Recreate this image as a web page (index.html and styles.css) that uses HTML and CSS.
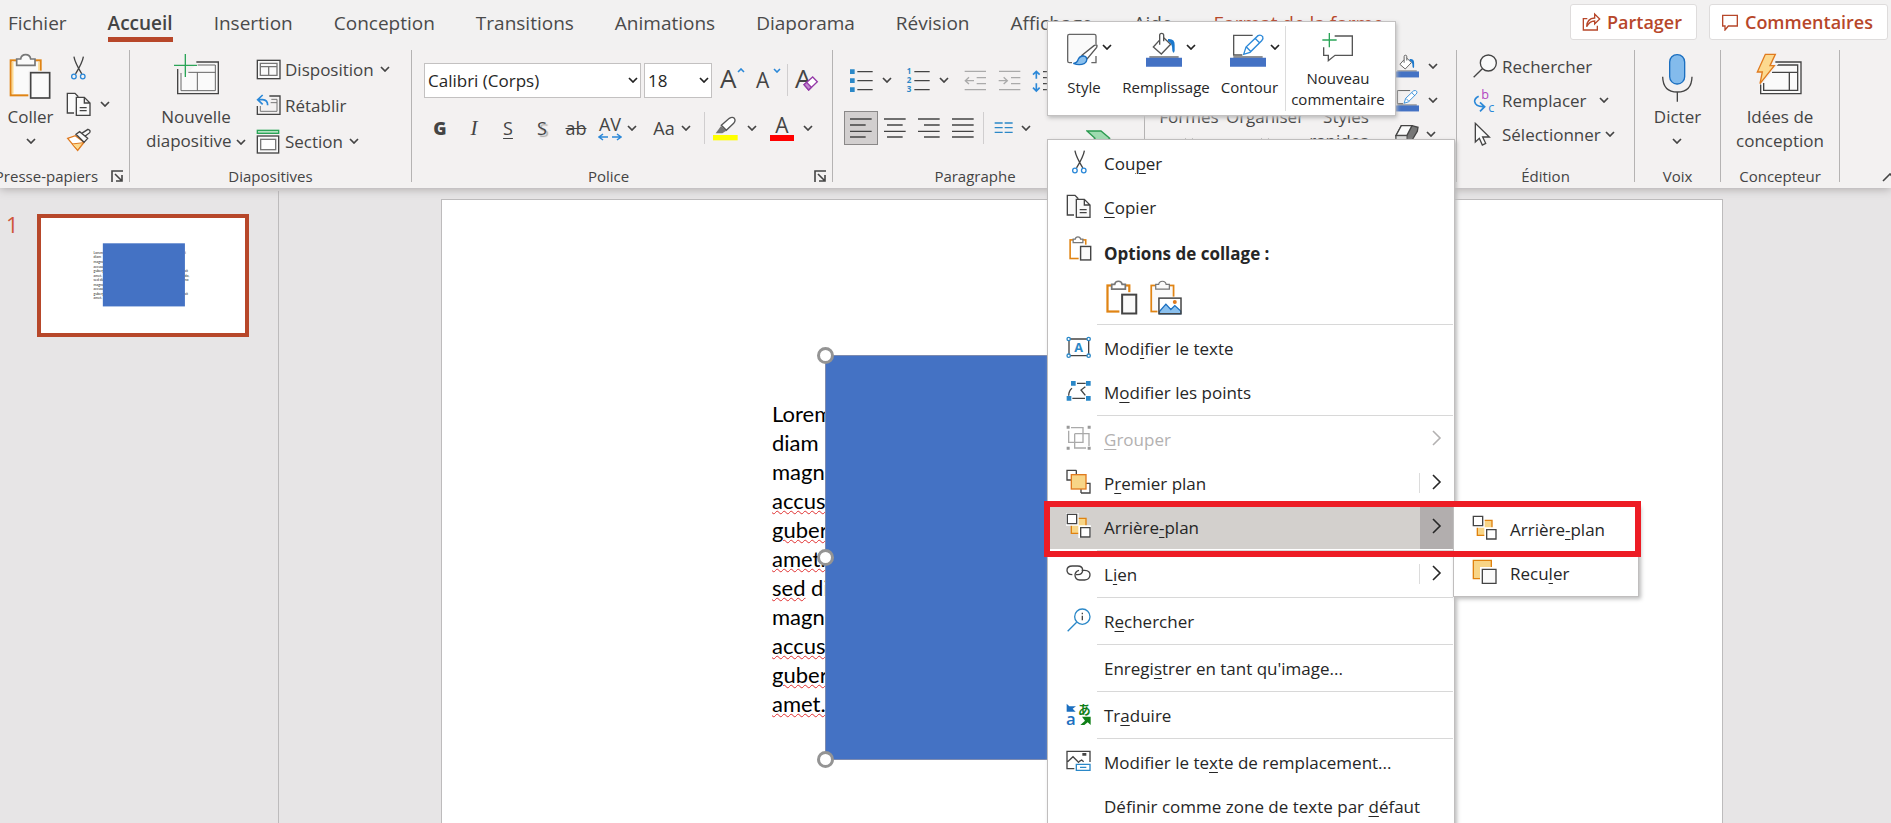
FILE: index.html
```
<!DOCTYPE html>
<html lang="fr">
<head>
<meta charset="utf-8">
<title>Présentation</title>
<link rel="stylesheet" href="styles.css">
</head>
<body>
<svg class="defs" aria-hidden="true">
  <symbol id="i-down" viewBox="0 0 10 6"><path d="M1 1l4 4 4-4" fill="none" stroke="currentColor" stroke-width="1.7"/></symbol>
  <symbol id="i-right" viewBox="0 0 10 16"><path d="M1 1l7 7-7 7" fill="none" stroke="currentColor" stroke-width="1.6"/></symbol>
  <symbol id="i-launch" viewBox="0 0 13 13"><path d="M1 12V1h11M4 4l7 7M11 5v6H5" fill="none" stroke="#444" stroke-width="1.6"/></symbol>
  <symbol id="i-paste" viewBox="40 165 129 141"><rect x="45" y="187" width="90" height="105" fill="#fafafa" stroke="#e08414" stroke-width="6"/><path d="M51 192v95M130 192v30" stroke="#fcd98f" stroke-width="5"/><path d="M63 202v-19h12q2-13 15-13t15 13h13v19z" fill="#fafafa" stroke="#777" stroke-width="5"/><path d="M98 218h70v85H98z" fill="#f5f3f3"/><rect x="105" y="224" width="57" height="76" fill="#fafafa" stroke="#444" stroke-width="5"/></symbol>
  <symbol id="i-paste-menu" viewBox="40 165 129 141"><rect x="46" y="187" width="88" height="105" fill="#fff" stroke="#e08414" stroke-width="9"/><path d="M63 202v-19h12q2-13 15-13t15 13h13v19z" fill="#fff" stroke="#777" stroke-width="7"/><path d="M94 214h75v90H94z" fill="#fff"/><rect x="105" y="224" width="57" height="76" fill="#fafafa" stroke="#444" stroke-width="8"/></symbol>
  <symbol id="i-pastepic" viewBox="40 165 129 141"><rect x="45" y="187" width="90" height="105" fill="#fafafa" stroke="#e08414" stroke-width="7"/><path d="M63 202v-19h12q2-13 15-13t15 13h13v19z" fill="#fafafa" stroke="#777" stroke-width="5"/><path d="M70 232h99v73H70z" fill="#fff"/><path d="M78 292l26-30 20 22 16-16 24 22v12H78z" fill="#8ac0ee" stroke="#1b6fc0" stroke-width="5"/><rect x="76" y="238" width="89" height="63" fill="none" stroke="#444" stroke-width="6"/><circle cx="140" cy="254" r="8" fill="#e07a1e"/></symbol>
  <symbol id="i-cut" viewBox="208 166 52 78"><g fill="none" stroke="#444" stroke-width="4"><path d="M220 170q3 18 24 53M249 170q-3 18-24 53"/><g stroke="#2b88d8"><circle cx="220" cy="231" r="7"/><circle cx="247" cy="231" r="7"/></g></g></symbol>
  <symbol id="i-copy" viewBox="196 275 78 75"><g fill="#fafafa" stroke="#444" stroke-width="4"><path d="M220 338h-20v-59h23l10 10" /><path d="M227 291h24l17 17v37h-41zM251 291v17h17M237 322h21M237 331h21"/></g></symbol>
  <symbol id="i-brush" viewBox="196 382 78 72"><path d="M201 413l23-8 26 20-19 24z" fill="#fff" stroke="#e07a1e" stroke-width="4"/><path d="M214 430l34-4-17 22z" fill="#fcd98f" stroke="#e07a1e" stroke-width="3"/><path d="M226 401l11-8 24 20-11 12zM243 398l19-12q9 3 5 10l-14 11" fill="#fafafa" stroke="#444" stroke-width="4"/></symbol>
  <symbol id="i-newslide" viewBox="516 156 141 129"><g fill="none"><path d="M590 187h58v87H534v-54h20z" fill="#fafafa"/><path d="M586 183h66v95H530v-74" stroke="#444" stroke-width="4"/><path d="M590 192h53v77H540v-53M562 214h81M589 214v55" stroke="#666" stroke-width="3"/><path d="M519 193h69M553 159v69" stroke="#2ba558" stroke-width="4"/></g></symbol>
  <symbol id="i-layout" viewBox="766 170 75 63"><g fill="#fafafa"><rect x="770" y="174" width="68" height="55" stroke="#444" stroke-width="4"/><path d="M779 183h50v36h-50zM779 193h50M804 193v26" stroke="#777" stroke-width="4"/></g></symbol>
  <symbol id="i-reset" viewBox="766 276 75 66"><g fill="none"><path d="M806 282h32v55h-68v-25" stroke="#444" stroke-width="4"/><path d="M812 292h17v36h-50v-16M810 302h19" stroke="#777" stroke-width="3"/><path d="M786 279l-15 14 15 14M771 293h15q15 1 15 17" stroke="#2b88d8" stroke-width="5"/></g></symbol>
  <symbol id="i-section" viewBox="766 382 75 75"><rect x="770" y="386" width="64" height="9" fill="#b5e2c2" stroke="#2ba558" stroke-width="4"/><rect x="770" y="403" width="64" height="51" fill="#fafafa" stroke="#444" stroke-width="4"/><rect x="780" y="413" width="45" height="31" fill="#fff" stroke="#777" stroke-width="4"/></symbol>
  <symbol id="i-bullets" viewBox="84 200 75 75"><path d="M87 204h14v14H87zM87 231h14v14H87zM87 258h14v14H87z" fill="#2b88c8"/><path d="M109 211h46M109 238h46M109 265h46" stroke="#444" stroke-width="4"/></symbol>
  <symbol id="i-align-l" viewBox="90 345 66 72"><path d="M90 354h65M90 372h47M90 391h65M90 408h47" stroke="#444" stroke-width="4"/></symbol>
  <symbol id="i-align-c" viewBox="90 345 66 72"><path d="M90 354h65M99 372h47M90 391h65M99 408h47" stroke="#444" stroke-width="4"/></symbol>
  <symbol id="i-align-r" viewBox="90 345 66 72"><path d="M90 354h65M108 372h47M90 391h65M108 408h47" stroke="#444" stroke-width="4"/></symbol>
  <symbol id="i-align-j" viewBox="90 345 66 72"><path d="M90 354h65M90 372h65M90 391h65M90 408h65" stroke="#444" stroke-width="4"/></symbol>
  <symbol id="i-fill" viewBox="318 94 108 105"><path d="M358 119l-18 20 24 21 28-29-21-20" fill="#fff" stroke="#555" stroke-width="4"/><path d="M359 132v-28q0-6 6-6t6 6v18" fill="none" stroke="#555" stroke-width="4"/><path d="M384 115q21-2 20 19v16q-3 12-7 0 0-24-13-28z" fill="#1b78cc"/><path d="M328 169h88" stroke="#222" stroke-width="3"/><path d="M318 171h108v27H318z" fill="#4472c4"/></symbol>
  <symbol id="i-outline" viewBox="576 94 108 105"><path d="M644 104h-57v59h26" fill="none" stroke="#555" stroke-width="4"/><path d="M617 161l7-22 36-34q8-4 14 3 3 6-3 12l-35 35zM651 113l15 15M626 140l13 13" fill="#fff" stroke="#2b88d8" stroke-width="4"/><path d="M586 169h88" stroke="#222" stroke-width="3"/><path d="M576 171h108v27H576z" fill="#4472c4"/></symbol>
  <symbol id="i-front" viewBox="79 208 78 78"><path d="M110 212H82v29h14M124 280h27v-29h-12M110 212v12M124 280v-12" fill="none" stroke="#444" stroke-width="4"/><rect x="95" y="225" width="44" height="43" fill="#f8d586" stroke="#e07a1e" stroke-width="4"/></symbol>
  <symbol id="i-back" viewBox="79 340 78 78"><path d="M95 356h44v45H95z" fill="#f8d586" stroke="#e0820f" stroke-width="4"/><path d="M79 340h38v38H79zM116 377h38v38h-38z" fill="#fff"/><path d="M83 344h28v28H83zM123 384h28v28h-28z" fill="#fff" stroke="#444" stroke-width="4"/></symbol>
</svg>

<div class="app">
  <header class="tabbar">
    <nav class="tabs" aria-label="Onglets du ruban">
      <a href="#fichier">Fichier</a>
      <a href="#accueil" class="active" aria-current="page">Accueil</a>
      <a href="#insertion">Insertion</a>
      <a href="#conception">Conception</a>
      <a href="#transitions">Transitions</a>
      <a href="#animations">Animations</a>
      <a href="#diaporama">Diaporama</a>
      <a href="#revision">Révision</a>
      <a href="#affichage">Affichage</a>
      <a href="#aide">Aide</a>
      <a href="#format" class="context">Format de la forme</a>
    </nav>
    <button class="action" type="button"><svg width="19" height="20" viewBox="424 38 57 60"><path d="M440 58h-12v34h42V79M438 82q1-25 24-26V44l15 15-15 15V65q-15 0-24 17z" fill="none" stroke="currentColor" stroke-width="4"/></svg>Partager</button>
    <button class="action" type="button"><svg width="18" height="17" viewBox="840 40 54 51"><path d="M845 44h44v32h-27l-10 12V76h-7z" fill="none" stroke="currentColor" stroke-width="4"/></svg>Commentaires</button>
  </header>

  <section class="ribbon" aria-label="Ruban">
    <div class="group clipboard">
      <div class="body">
        <button class="big" type="button"><span class="pic"><svg width="43" height="47"><use href="#i-paste"/></svg></span>Coller<svg class="down below" width="10" height="6"><use href="#i-down"/></svg></button>
        <div class="stack">
          <button class="row" type="button" aria-label="Couper"><svg class="mid" width="17" height="26"><use href="#i-cut"/></svg></button>
          <button class="row" type="button" aria-label="Copier"><svg width="26" height="25"><use href="#i-copy"/></svg><svg class="down far" width="10" height="6"><use href="#i-down"/></svg></button>
          <button class="row" type="button" aria-label="Reproduire la mise en forme"><svg width="26" height="24"><use href="#i-brush"/></svg></button>
        </div>
      </div>
      <div class="caption"><span>Presse-papiers</span><button class="launch" type="button" aria-label="Options du presse-papiers"><svg width="13" height="13"><use href="#i-launch"/></svg></button></div>
    </div>

    <div class="group slides">
      <div class="body">
        <button class="big" type="button"><span class="pic"><svg width="47" height="43"><use href="#i-newslide"/></svg></span>Nouvelle<span>diapositive <svg class="down" width="10" height="6"><use href="#i-down"/></svg></span></button>
        <div class="stack">
          <button class="row" type="button"><svg width="25" height="21"><use href="#i-layout"/></svg>Disposition<svg class="down" width="10" height="6"><use href="#i-down"/></svg></button>
          <button class="row" type="button"><svg width="25" height="22"><use href="#i-reset"/></svg>Rétablir</button>
          <button class="row" type="button"><svg width="25" height="25"><use href="#i-section"/></svg>Section<svg class="down" width="10" height="6"><use href="#i-down"/></svg></button>
        </div>
      </div>
      <div class="caption"><span>Diapositives</span></div>
    </div>

    <div class="group font">
      <div class="body lines">
        <div class="line">
          <span class="combo name"><select aria-label="Police"><option>Calibri (Corps)</option></select><svg class="down" width="10" height="6"><use href="#i-down"/></svg></span>
          <span class="combo size"><select aria-label="Taille"><option>18</option></select><svg class="down" width="10" height="6"><use href="#i-down"/></svg></span>
          <button class="tool letter large" type="button" aria-label="Augmenter la taille"><span>A</span><svg class="blue sup" width="8" height="5" viewBox="0 0 8 5"><path d="M1 4l3-3 3 3" fill="none" stroke="currentColor" stroke-width="1.6"/></svg></button>
          <button class="tool letter small" type="button" aria-label="Réduire la taille"><span>A</span><svg class="blue sup" width="8" height="5" viewBox="0 0 8 5"><path d="M1 1l3 3 3-3" fill="none" stroke="currentColor" stroke-width="1.6"/></svg></button>
          <span class="bar"></span>
          <button class="tool letter large clear" type="button" aria-label="Effacer la mise en forme"><span>A</span><svg class="eraser" width="16" height="15" viewBox="1206 228 48 45"><path d="M1209 254l26-23 14 14-26 25z" fill="#fff" stroke="#953ba8" stroke-width="4"/><path d="M1209 254l8-7 14 15-8 8z" fill="#c48ad0" stroke="#953ba8" stroke-width="4"/></svg></button>
        </div>
        <div class="line">
          <button class="tool b" type="button">G</button>
          <button class="tool i" type="button">I</button>
          <button class="tool u" type="button">S</button>
          <button class="tool shadow" type="button">S</button>
          <button class="tool strike" type="button">ab</button>
          <button class="split" type="button"><span class="spacing">AV<svg width="24" height="8" viewBox="0 0 24 8"><path d="M5 1L1 4l4 3M1 4h9M19 1l4 3-4 3M23 4h-9" fill="none" stroke="#2b88d8" stroke-width="1.5"/></svg></span><svg class="down" width="10" height="6"><use href="#i-down"/></svg></button>
          <button class="split" type="button"><span class="case">Aa</span><svg class="down" width="10" height="6"><use href="#i-down"/></svg></button>
          <span class="bar"></span>
          <button class="split wide" type="button" aria-label="Couleur de surbrillance"><svg width="25" height="25" viewBox="938 346 75 75"><path d="M946 398l16-22 16 14-12 8z" fill="#777"/><path d="M963 374l24-21q9-6 15 0 5 7-2 15l-22 21z" fill="#fff" stroke="#555" stroke-width="4"/><path d="M938 403h74v16h-74z" fill="#ff0"/></svg><svg class="down" width="10" height="6"><use href="#i-down"/></svg></button>
          <button class="split wide" type="button"><span class="fontcolor">A</span><svg class="down" width="10" height="6"><use href="#i-down"/></svg></button>
        </div>
      </div>
      <div class="caption"><span>Police</span><button class="launch" type="button" aria-label="Options de police"><svg width="13" height="13"><use href="#i-launch"/></svg></button></div>
    </div>

    <div class="group para">
      <div class="body lines">
        <div class="line">
          <button class="split list" type="button" aria-label="Puces"><svg width="25" height="25"><use href="#i-bullets"/></svg><svg class="down" width="10" height="6"><use href="#i-down"/></svg></button>
          <button class="split list" type="button" aria-label="Numérotation"><svg width="25" height="25" viewBox="255 200 75 75"><g class="digits"><text x="257" y="219">1</text><text x="257" y="246">2</text><text x="257" y="273">3</text></g><path d="M280 211h46M280 238h46M280 265h46" stroke="#444" stroke-width="4"/></svg><svg class="down" width="10" height="6"><use href="#i-down"/></svg></button>
          <button class="tool" type="button" aria-label="Réduire le retrait"><svg width="23" height="25" viewBox="434 200 69 75"><path d="M436 210h64M472 229h28M472 247h28M436 265h64M438 238h26M449 228l-11 10 11 10" fill="none" stroke="#aaa" stroke-width="4"/></svg></button>
          <button class="tool" type="button" aria-label="Augmenter le retrait"><svg width="23" height="25" viewBox="536 200 69 75"><path d="M539 210h64M575 229h28M575 247h28M539 265h64M538 238h26M553 228l11 10-11 10" fill="none" stroke="#aaa" stroke-width="4"/></svg></button>
          <button class="tool" type="button" aria-label="Interligne"><svg width="23" height="25" viewBox="637 200 69 75"><path d="M650 212v20M640 220l10-10 10 10M650 246v22M640 259l10 10 10-10" fill="none" stroke="#2b88d8" stroke-width="5"/><path d="M670 211h35M670 229h35M670 247h35M670 265h35" stroke="#444" stroke-width="4"/></svg></button>
        </div>
        <div class="line">
          <button class="tool on" type="button" aria-label="Aligner à gauche" aria-pressed="true"><svg width="22" height="24"><use href="#i-align-l"/></svg></button>
          <button class="tool" type="button" aria-label="Centrer"><svg width="22" height="24"><use href="#i-align-c"/></svg></button>
          <button class="tool" type="button" aria-label="Aligner à droite"><svg width="22" height="24"><use href="#i-align-r"/></svg></button>
          <button class="tool" type="button" aria-label="Justifier"><svg width="22" height="24"><use href="#i-align-j"/></svg></button>
          <span class="bar"></span>
          <button class="split cols" type="button" aria-label="Colonnes"><svg width="20" height="14" viewBox="523 362 60 42"><path d="M525 368h24M555 368h24M525 382h24M555 382h24M525 396h24M555 396h24" stroke="#2b88c8" stroke-width="4"/></svg><svg class="down" width="10" height="6"><use href="#i-down"/></svg></button>
          <button class="tool smartart" type="button" aria-label="Convertir en SmartArt"><svg width="25" height="20" viewBox="795 392 75 60"><path d="M798 395h42l26 22-26 22h-42l24-22z" fill="#9fdbb0" stroke="#2b9a50" stroke-width="4"/></svg></button>
        </div>
      </div>
      <div class="caption"><span>Paragraphe</span><span class="launch"></span></div>
    </div>

    <div class="group draw">
      <div class="body">
        <button class="big" type="button"><span class="pic"></span>Formes<svg class="down below" width="10" height="6"><use href="#i-down"/></svg></button>
        <button class="big" type="button"><span class="pic"></span>Organiser<svg class="down below" width="10" height="6"><use href="#i-down"/></svg></button>
        <button class="big" type="button"><span class="pic"></span>Styles<span>rapides <svg class="down" width="10" height="6"><use href="#i-down"/></svg></span></button>
        <div class="stack">
          <button class="row" type="button" aria-label="Remplissage"><svg width="24" height="24"><use href="#i-fill"/></svg><svg class="down far" width="10" height="6"><use href="#i-down"/></svg></button>
          <button class="row" type="button" aria-label="Contour"><svg width="24" height="24"><use href="#i-outline"/></svg><svg class="down far" width="10" height="6"><use href="#i-down"/></svg></button>
          <button class="row" type="button" aria-label="Effets"><svg width="24" height="21" viewBox="1059 370 72 63"><path d="M1062 406l16-31h32l18 5-2 12-15 25h-48z" fill="#777" stroke="#444" stroke-width="4"/><path d="M1078 375h32l-15 29h-33z" fill="#fafafa" stroke="#444" stroke-width="4"/><path d="M1062 405h33v14h-33z" fill="#ddd" stroke="#444" stroke-width="3"/></svg><svg class="down" width="10" height="6"><use href="#i-down"/></svg></button>
        </div>
      </div>
      <div class="caption"><span>Dessin</span></div>
    </div>

    <div class="group edit">
      <div class="body">
        <div class="stack">
          <button class="row" type="button"><svg width="25" height="25" viewBox="100 157 75 75"><path d="M128 201l-26 26" stroke="#444" stroke-width="4"/><circle cx="146" cy="184" r="24" fill="#fafafa" stroke="#444" stroke-width="4"/></svg>Rechercher</button>
          <button class="row" type="button"><svg width="25" height="25" viewBox="97 260 75 75"><text class="rep-b" x="122" y="292">b</text><text class="rep-c" x="143" y="332">c</text><path d="M114 285q-13 7-12 16 3 16 28 15M118 303l14 13-14 14" fill="none" stroke="#2b88d8" stroke-width="5"/></svg>Remplacer<svg class="down far" width="10" height="6"><use href="#i-down"/></svg></button>
          <button class="row" type="button"><svg width="25" height="24" viewBox="103 364 75 72"><path d="M110 368v56l12-11 9 20 10-5-9-19h20z" fill="#fafafa" stroke="#444" stroke-width="4"/></svg>Sélectionner<svg class="down" width="10" height="6"><use href="#i-down"/></svg></button>
        </div>
      </div>
      <div class="caption"><span>Édition</span></div>
    </div>

    <div class="group">
      <div class="body center">
        <button class="big" type="button"><span class="pic"><svg width="33" height="49" viewBox="666 156 99 147"><rect x="692" y="161" width="45" height="88" rx="22" fill="#83bbec" stroke="#1b6fc0" stroke-width="4"/><path d="M671 227q1 46 44 46t44-46M715 273v29" fill="none" stroke="#444" stroke-width="4"/></svg></span>Dicter<svg class="down below" width="10" height="6"><use href="#i-down"/></svg></button>
      </div>
      <div class="caption"><span>Voix</span></div>
    </div>

    <div class="group">
      <div class="body center">
        <button class="big" type="button"><span class="pic"><svg width="47" height="43" viewBox="946 156 141 129"><path d="M960 187h120v91H960z" fill="#fafafa"/><g fill="none" stroke="#444" stroke-width="4"><path d="M1004 183h77v95H960v-30M1000 192h71v76H969v-22M994 214h77M1046 214v54"/></g><path d="M974 160h30l-16 34h13l-43 54 7-35h-15z" fill="#fcd98f" stroke="#f3f1f1" stroke-width="12"/><path d="M974 160h30l-16 34h13l-43 54 7-35h-15z" fill="#fcd98f" stroke="#e07a1e" stroke-width="4"/></svg></span>Idées de<span>conception</span></button>
      </div>
      <div class="caption"><span>Concepteur</span></div>
    </div>

    <div class="collapse"><button type="button" aria-label="Réduire le ruban"><svg width="16" height="9" viewBox="0 0 16 9"><path d="M1 8l7-7 7 7" fill="none" stroke="#444" stroke-width="1.6"/></svg></button></div>
  </section>

  <main class="workspace">
    <aside class="thumbs">
      <span class="num">1</span>
      <svg class="thumb" viewBox="0 0 1280 720" role="img" aria-label="Diapositive 1">
        <g class="thumb-text">
          <text x="330" y="223">Lorem</text><text x="330" y="252">diam</text><text x="330" y="281">magna</text><text x="330" y="310">accusam</text><text x="330" y="338">gubergren</text><text x="330" y="367">amet.</text><text x="330" y="396">sed diam</text><text x="330" y="425">magna</text><text x="330" y="454">accusam</text><text x="330" y="482">gubergren</text><text x="330" y="510">amet.</text>
          <text x="903" y="223">i</text><text x="900" y="338">sit</text><text x="900" y="367">do,</text><text x="900" y="396">no</text><text x="900" y="482">sit</text>
        </g>
        <rect x="388" y="158" width="515" height="396" fill="#4472c4"/>
      </svg>
    </aside>
    <div class="canvas">
      <article class="slide">
        <div class="textbox">
          <div>Lorem</div><div>diam</div><div>magna</div><div><u>accusam</u></div><div><u>gubergren</u></div><div><u>amet.</u></div><div><u>sed</u> diam</div><div>magna</div><div><u>accusam</u></div><div><u>gubergren</u></div><div><u>amet.</u></div>
        </div>
        <div class="shape"><i class="handle top"></i><i class="handle middle"></i><i class="handle bottom"></i></div>
      </article>
    </div>
  </main>

  <div class="mini" role="toolbar" aria-label="Mini-barre d'outils">
    <button class="m-style" type="button"><span class="pic"><svg width="32" height="34" viewBox="82 94 96 102"><path d="M100 186h-8q-5 0-5-5v-75q0-5 5-5h75q5 0 5 5v24M172 166v20h-14" fill="#fafafa" stroke="#666" stroke-width="4"/><path d="M130 164l36-29q12-6 8 5l-28 34z" fill="#fff" stroke="#555" stroke-width="4"/><path d="M104 188q12-1 15-13 8-13 22-7 8 12-3 20-16 8-34 0z" fill="#8ac0ee" stroke="#1b6fc0" stroke-width="4"/></svg><svg class="down" width="10" height="6"><use href="#i-down"/></svg></span>Style</button>
    <button class="m-fill" type="button"><span class="pic"><svg width="36" height="35"><use href="#i-fill"/></svg><svg class="down" width="10" height="6"><use href="#i-down"/></svg></span>Remplissage</button>
    <button class="m-line" type="button"><span class="pic"><svg width="36" height="35"><use href="#i-outline"/></svg><svg class="down" width="10" height="6"><use href="#i-down"/></svg></span>Contour</button>
    <button class="m-note" type="button"><span class="pic"><svg width="32" height="30" viewBox="846 94 96 90"><path d="M884 106h53v58h-52l-20 16v-16h-14v-24" fill="none" stroke="#555" stroke-width="4"/><path d="M847 118h43M868 97v43" stroke="#2ba558" stroke-width="4"/></svg></span>Nouveau<br>commentaire</button>
  </div>

  <div class="menu context-menu" role="menu">
    <button class="item" type="button" role="menuitem"><span class="ic"><svg width="17" height="26"><use href="#i-cut"/></svg></span><span>Cou<u>p</u>er</span></button>
    <button class="item" type="button" role="menuitem"><span class="ic"><svg width="26" height="25"><use href="#i-copy"/></svg></span><span><u>C</u>opier</span></button>
    <div class="item heading"><span class="ic right"><svg width="23" height="25"><use href="#i-paste-menu"/></svg></span><span>Options de collage :</span></div>
    <div class="paste-row">
      <button type="button" aria-label="Utiliser le thème de destination"><svg width="32" height="35"><use href="#i-paste-menu"/></svg></button>
      <button type="button" aria-label="Image"><svg width="32" height="35"><use href="#i-pastepic"/></svg></button>
    </div>
    <hr>
    <button class="item" type="button" role="menuitem"><span class="ic"><svg width="26" height="23" viewBox="79 617 78 69"><path d="M88 626h59v50H88z" fill="none" stroke="#444" stroke-width="4"/><g fill="#fff" stroke="#2b88c8" stroke-width="4"><circle cx="87" cy="626" r="5"/><circle cx="147" cy="626" r="5"/><circle cx="87" cy="676" r="5"/><circle cx="147" cy="676" r="5"/></g><text class="box-a" x="117" y="665">A</text></svg></span><span>Mod<u>i</u>fier le texte</span></button>
    <button class="item" type="button" role="menuitem"><span class="ic"><svg width="26" height="22" viewBox="79 748 78 66"><path d="M112 758h26M97 773q-10 8-10 22M98 803h38M137 768l-13 10 13 16" fill="none" stroke="#444" stroke-width="4"/><path d="M94 751h14v14H94zM139 751h14v14h-14zM81 796h14v14H81zM139 796h14v14h-14z" fill="#2b88c8"/></svg></span><span>M<u>o</u>difier les points</span></button>
    <hr>
    <button class="item" type="button" role="menuitem" disabled><span class="ic"><svg width="26" height="26" viewBox="79 76 78 78"><g fill="none" stroke="#aaa" stroke-width="4"><path d="M94 84h36v44H87V93M105 102h43v37M105 102v43h34"/></g><path d="M81 78h9v9h-9zM144 78h9v9h-9zM81 141h9v9h-9zM144 141h9v9h-9z" fill="#999"/></svg></span><span><u>G</u>rouper</span><svg class="more" width="10" height="16"><use href="#i-right"/></svg></button>
    <button class="item" type="button" role="menuitem"><span class="ic"><svg width="26" height="26"><use href="#i-front"/></svg></span><span>P<u>r</u>emier plan</span><span class="rule"></span><svg class="more" width="10" height="16"><use href="#i-right"/></svg></button>
    <button class="item selected" type="button" role="menuitem" aria-expanded="true"><span class="ic"><svg width="26" height="26"><use href="#i-back"/></svg></span><span>Arrière<u>-</u>plan</span><span class="arrow"><svg class="more" width="10" height="16"><use href="#i-right"/></svg></span></button>
    <hr>
    <button class="item" type="button" role="menuitem"><span class="ic"><svg width="26" height="18" viewBox="79 492 78 54"><g fill="none" stroke="#444" stroke-width="4"><path d="M98 524q-16 0-16-13t16-13h16q15 0 15 13t-15 13h-5"/><path d="M126 511h9q17 1 16 14-1 14-16 15h-15q-14-1-14-15 1-11 12-14"/></g></svg></span><span>L<u>i</u>en</span><span class="rule"></span><svg class="more" width="10" height="16"><use href="#i-right"/></svg></button>
    <hr>
    <button class="item" type="button" role="menuitem"><span class="ic"><svg width="26" height="26" viewBox="79 50 78 78"><path d="M111 96l-27 27" stroke="#2b88c8" stroke-width="4"/><circle cx="128" cy="79" r="23" fill="#fff" stroke="#2b88c8" stroke-width="4"/><path d="M128 76v14M128 67v5" stroke="#444" stroke-width="4"/></svg></span><span>R<u>e</u>chercher</span></button>
    <hr>
    <button class="item" type="button" role="menuitem"><span class="ic"></span><span>Enregi<u>s</u>trer en tant qu'image...</span></button>
    <hr>
    <button class="item" type="button" role="menuitem"><span class="ic"><svg width="26" height="26" viewBox="79 334 78 78"><text class="tr-a" x="79" y="407">a</text><text class="tr-j" x="115" y="372">あ</text><path d="M81 342l8 8h20l-10 7 9 9H81z" fill="#1b6fc0"/><path d="M153 406l-9-8-10 8h-12l14-13-9-12h26z" fill="#118018"/></svg></span><span>Tr<u>a</u>duire</span></button>
    <hr>
    <button class="item" type="button" role="menuitem"><span class="ic"><svg width="26" height="24" viewBox="79 482 78 72"><path d="M104 541H82v-52h69v32M84 520l16-15 18 18M118 520l8-5 6 5M130 500h8v-4h-8z" fill="none" stroke="#444" stroke-width="4"/><path d="M110 528h41v18h-41zM121 537h19" fill="#fff" stroke="#2b88c8" stroke-width="4"/></svg></span><span>Modifier le te<u>x</u>te de remplacement...</span></button>
    <button class="item" type="button" role="menuitem"><span class="ic"></span><span>Définir comme zone de texte par <u>d</u>éfaut</span></button>
  </div>

  <div class="menu submenu" role="menu">
    <button class="item" type="button" role="menuitem"><span class="ic"><svg width="26" height="26"><use href="#i-back"/></svg></span><span>Arrière<u>-</u>plan</span></button>
    <button class="item" type="button" role="menuitem"><span class="ic"><svg width="26" height="26" viewBox="157 237 78 78"><path d="M161 241h54v55h-54z" fill="#f8d586" stroke="#e0820f" stroke-width="4"/><path d="M181 261h54v54h-54z" fill="#fff"/><path d="M188 268h41v42h-41z" fill="#fafafa" stroke="#444" stroke-width="4"/></svg></span><span>Recu<u>l</u>er</span></button>
  </div>
  <div class="highlight"></div>
</div>
</body>
</html>
```

FILE: styles.css
```
* { box-sizing: border-box; }
body { margin: 0; font-family: "Open Sans", "Noto Sans", "Noto Sans CJK JP", sans-serif; font-size: 17px; color: #444; }
button { font: inherit; color: inherit; background: none; border: 0; padding: 0; margin: 0; white-space: nowrap; }
svg { flex: none; display: block; }
.defs { position: absolute; width: 0; height: 0; }
.app { position: relative; height: 100vh; overflow: hidden; display: flex; flex-direction: column; background: #e7e5e6; }

/* Tabs */
.tabbar { display: flex; align-items: flex-start; height: 50px; padding: 4px 3px 0 8px; background: #f2f1f1; font-size: 18px; }
.tabs { display: flex; gap: 41px; flex: 1; font-size: 19px; }
.tabs a { color: #4a4a4a; text-decoration: none; line-height: 28px; padding-top: 5px; height: 38px; white-space: nowrap; }
.tabs .active { font-weight: 600; border-bottom: 5px solid #b7472a; color: #444; }
.tabs .context { color: #b7472a; }
.action { display: flex; align-items: center; gap: 6px; height: 36px; padding: 0 14px 0 11px; margin-left: 12px; background: #fff; border: 1px solid #dedcdc; border-radius: 3px; color: #b7472a; font-weight: 600; }

/* Ribbon */
.ribbon { position: relative; flex: none; display: grid; grid-template-columns: 130fr 282fr 421fr 312fr 312fr 178fr 86fr 119fr 51fr; padding-bottom: 6px; background: #f3f1f1; box-shadow: 0 1px 9px #aaa6a7; clip-path: inset(0 0 -12px 0); }
.group { display: flex; flex-direction: column; height: 132px; min-width: 0; border-right: 1px solid #b5b3b3; }
.body { flex: 1; display: flex; align-items: flex-start; }
.body.center { justify-content: center; }
.caption { display: flex; justify-content: center; align-items: center; height: 20px; margin-bottom: -4px; font-size: 15px; line-height: 20px; }
.caption > span:first-child { flex: 1; display: flex; justify-content: center; white-space: nowrap; }
.launch { flex: none; width: 27px; padding-left: 9px; }
.clipboard .caption > span:first-child { margin-left: -9px; }

.big { display: flex; flex-direction: column; align-items: center; padding-top: 3px; line-height: 24px; }
.big .pic { height: 52px; }
.big .down { margin: 0; }
.big span .down { display: inline-block; vertical-align: middle; }
.big .below { margin: 9px 0; }
.stack { display: flex; flex-direction: column; }
.row { display: flex; align-items: center; gap: 4px; height: 36px; text-align: left; }
.row .down { margin-left: 3px; }
.row .far { margin-left: 5px; }
.row .mid { margin-left: 4px; }
.clipboard .big { width: 61px; }
.clipboard .stack { padding-left: 5px; }
.clipboard .far { margin-left: 4px; }
.slides { padding-left: 14px; }
.slides .big { width: 104px; }
.slides .stack { padding: 1px 0 0 8px; }
.slides .row .down { margin-left: 2px; }
.slides .caption { margin-left: -14px; }
.draw .big:nth-child(1) { width: 88px; }
.draw .big:nth-child(2) { width: 64px; }
.draw .big:nth-child(3) { width: 98px; }
.draw .row, .edit .row { height: 34px; padding-bottom: 2px; }
.edit .body { padding-left: 16px; }
.edit .far { margin-left: 8px; }
.edit .row .down:not(.far) { margin-left: 0; }

.lines { flex-direction: column; gap: 14px; padding: 13px 0 0 11px; }
.line { display: flex; align-items: center; height: 34px; }
.combo { position: relative; display: flex; align-items: center; height: 35px; margin: 0 3px 0 1px; }
.combo.size { margin: 0 4px 0 0; }
.combo select { appearance: none; width: 100%; height: 35px; padding: 0 3px; border: 1px solid #c3c1c1; border-radius: 0; background: #fff; font: inherit; color: #262626; }
.combo .down { position: absolute; right: 3px; color: #222; }
.combo.name { width: 217px; }
.combo.size { width: 68px; }
.tool { width: 34px; height: 34px; display: flex; align-items: center; justify-content: center; font-size: 18px; }
.tool.on { background: #d2cfcf; border: 1px solid #8a8888; }
.letter { position: relative; width: 36px; justify-content: flex-start; padding-left: 4px; font-size: 21px; line-height: 34px; }
.letter.large { font-size: 26px; }
.letter.large span { margin-top: -4px; }
.letter.small { width: 32px; }
.sup { position: absolute; top: 5px; right: 7px; }
.small .sup { right: 3px; }
.blue { color: #2b88d8; }
.eraser { position: absolute; right: 8px; bottom: 6px; }
.bar { width: 1px; height: 32px; background: #d0cecf; margin: 0 3px; }
.b { font-weight: 800; }
.i { font-style: italic; font-family: "Liberation Serif", serif; font-size: 21px; }
.u { text-decoration: underline; text-underline-offset: 3px; }
.shadow { text-shadow: 2px 2px 1px #aaa; }
.strike { text-decoration: line-through; }
.split { display: flex; align-items: center; gap: 5px; width: 54px; height: 34px; padding-left: 5px; font-size: 18px; }
.split.wide { width: 57px; gap: 9px; }
.spacing, .case { width: 24px; display: flex; flex-direction: column; align-items: center; line-height: 18px; }
.fontcolor { width: 24px; text-align: center; font-size: 21px; line-height: 20px; border-bottom: 6px solid #f00; }
.split.list { width: 57px; gap: 8px; }
.cols { width: 45px; gap: 7px; padding-left: 7px; }
.smartart { margin: 10px 0 0 49px; align-items: flex-end; }
.digits { font-size: 24px; font-weight: 700; fill: #2b88c8; }
.rep-b { font-size: 38px; fill: #b146c2; }
.rep-c { font-size: 38px; fill: #2b88d8; }
.collapse { display: flex; align-items: flex-end; justify-content: flex-end; overflow: hidden; }
.collapse button { margin-right: -7px; }

/* Workspace */
.workspace { flex: 1; min-height: 0; display: flex; padding-top: 3px; }
.thumbs { flex: none; width: 279px; display: flex; align-items: flex-start; padding: 23px 0 0 6px; border-right: 1px solid #bdbbbc; }
.num { width: 31px; font-size: 22px; line-height: 20px; color: #d0563a; }
.thumb { width: 212px; height: 123px; border: 4px solid #b7472a; background: #fff; }
.thumb-text { font-family: Lato, sans-serif; font-size: 22px; fill: #222; }
.canvas { flex: 1; padding: 8px 168px 0 162px; }
.slide { position: relative; height: 100%; background: #fff; border: 1px solid #bdbbbc; border-bottom: 0; }
.textbox { position: absolute; left: 330px; top: 199px; color: #000; font: 22px/29px Lato, sans-serif; }
.textbox u { text-decoration: underline wavy #e03030 1px; text-underline-offset: 1px; }
.shape { position: absolute; left: 383px; top: 155px; width: 515px; height: 405px; background: #4472c4; border: 1px solid #7d8bb0; }
.handle { position: absolute; left: -9px; width: 17px; height: 17px; border: 3px solid #949494; border-radius: 50%; background: #fff; }
.handle.top { top: -9px; }
.handle.middle { top: 193px; }
.handle.bottom { bottom: -9px; }

/* Floating toolbar */
.mini { position: absolute; left: 1047px; top: 21px; display: flex; height: 95px; padding: 4px 0; background: #fff; border: 1px solid #c3c1c1; box-shadow: 1px 2px 4px #bbb; font-size: 15px; line-height: 21px; color: #262626; }
.mini button { display: flex; flex-direction: column; align-items: center; padding-top: 6px; }
.mini .pic { display: flex; gap: 4px; align-items: center; height: 45px; padding-bottom: 11px; margin-left: 10px; }
.mini .down { margin-bottom: 4px; color: #222; }
.mini .m-style { width: 70px; padding-left: 2px; }
.m-fill { width: 96px; }
.m-line { width: 71px; }
.mini .m-note { display: block; width: 110px; padding: 5px 5px 0 0; border-left: 1px solid #dcdcdc; text-align: center; }
.mini .m-note .pic { justify-content: center; margin: 0; height: 36px; padding-bottom: 6px; }

/* Menus */
.menu { position: absolute; background: #fff; border: 1px solid #c0bebe; box-shadow: 2px 2px 4px #bbb; padding: 1px 0; color: #262626; }
.context-menu { left: 1047px; top: 139px; width: 408px; }
.submenu { left: 1453px; top: 505px; width: 186px; }
.item { display: flex; align-items: center; gap: 12px; width: 100%; height: 44px; padding-left: 18px; text-align: left; }
.item u { text-underline-offset: 3px; text-decoration-thickness: 1px; }
.item:disabled { color: #b3b1b1; }
.ic { width: 26px; height: 26px; margin-bottom: 2px; display: flex; align-items: center; justify-content: center; }
.ic.right { justify-content: flex-end; margin-bottom: 10px; }
.heading { height: 46px; padding-top: 2px; font-weight: 700; }
.more { margin: 0 12px 2px auto; }
.rule { width: 1px; height: 20px; margin-left: auto; background: #dcdcdc; }
.rule + .more { margin-left: 0; }
.selected { background: #d3d0cd; }
.arrow { align-self: stretch; display: flex; align-items: center; width: 34px; margin-left: auto; background: #b2aeae; }
.paste-row { display: flex; gap: 12px; height: 48px; padding: 4px 0 0 58px; }
.paste-row button { width: 32px; height: 36px; }
.menu hr { height: 1px; margin: 1px 1px 1px 49px; border: 0; background: #d8d8d8; }
.box-a { font-size: 38px; font-weight: 700; fill: #2b88c8; text-anchor: middle; }
.tr-a { font-size: 50px; font-weight: 600; fill: #1b6fc0; }
.tr-j { font-family: "Noto Sans CJK JP", sans-serif; font-size: 38px; font-weight: 700; fill: #118018; }
.highlight { position: absolute; left: 1044px; top: 501px; width: 597px; height: 56px; border: 6px solid #ed1c24; pointer-events: none; }
```
